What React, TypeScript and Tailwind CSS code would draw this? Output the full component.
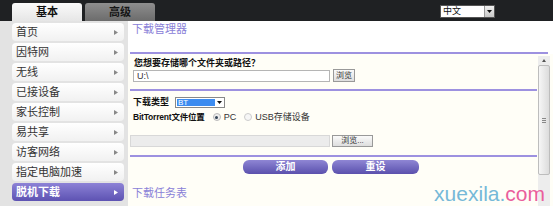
const NAV = ['首页', '因特网', '无线', '已接设备', '家长控制', '易共享', '访客网络', '指定电脑加速', '脱机下载'];

function Caret({ className }: { className: string }) {
  return (
    <svg width="4" height="5" viewBox="0 0 4 5" className={className}>
      <path d="M0 0 L4 2.5 L0 5 Z" fill="currentColor" />
    </svg>
  );
}

function Down() {
  return (
    <svg width="5" height="3" viewBox="0 0 5 3">
      <path d="M0 0 H5 L2.5 3 Z" fill="#111" />
    </svg>
  );
}

function Rule() {
  return <div className="h-[2px] bg-[#9d91e0]" />;
}

export default function App() {
  return (
    <div className="relative w-[553px] h-[206px] overflow-hidden bg-[#e3e3e3] font-['Liberation_Sans','Noto_Sans_CJK_SC',sans-serif] text-[#222]">
      {/* top bar */}
      <div className="flex items-end h-[21px] bg-[#1f2123] pl-[12px]">
        <div className="flex items-center justify-center w-[70px] h-[18px] rounded-t-[3px] bg-gradient-to-b from-[#fafafa] to-[#e6e6e6] text-[11px] font-bold text-[#111] leading-none">
          基本
        </div>
        <div className="flex items-center justify-center ml-[3px] w-[70px] h-[18px] rounded-t-[3px] bg-gradient-to-b from-[#8e8e8e] to-[#6c6c6c] text-[11px] font-bold text-[#161616] leading-none">
          高级
        </div>
        <div className="ml-auto mr-[58px] mb-[3px] flex h-[13px] w-[55px] border border-[#555] bg-white">
          <span className="flex-1 pl-[2px] text-[9px] leading-[11px] text-[#111]">中文</span>
          <span className="flex w-[10px] items-center justify-center border-l border-[#999] bg-gradient-to-b from-[#f0f0f0] to-[#c8c8c8]">
            <Down />
          </span>
        </div>
      </div>

      <div className="flex h-[185px]">
        {/* side nav */}
        <div className="flex w-[128px] shrink-0 flex-col gap-[2px] pl-[12px] pr-[4px] pt-[2px]">
          {NAV.map((n, i) => {
            const on = i === NAV.length - 1;
            return (
              <div
                key={n}
                className={`flex h-[18px] items-center rounded-[4px] pl-[4px] pr-[6px] text-[11px] leading-none ${
                  on
                    ? 'bg-gradient-to-b from-[#8d82d6] to-[#5d52b2] font-bold text-white'
                    : 'bg-gradient-to-b from-white to-[#f1f1f1] text-[#333]'
                }`}
              >
                <span className="flex-1">{n}</span>
                <Caret className={on ? 'text-white' : 'text-[#888]'} />
              </div>
            );
          })}
        </div>

        {/* content */}
        <div className="flex flex-1 flex-col bg-white">
          <div className="h-[31px] pl-[4px] pt-[2px] text-[11px] leading-[13px] text-[#8a81d8]">下载管理器</div>
          <div className="ml-[2px] mr-[5px]">
            <Rule />
          </div>

          <div className="flex flex-1 bg-[#fffef7]">
            <div className="ml-[2px] flex w-[407px] flex-col">
              <div className="mt-[4px] ml-[4px] text-[9px] font-bold leading-[11px] text-[#111]">您想要存储哪个文件夹或路径？</div>
              <div className="ml-[3px] flex items-center">
                <div className="h-[12px] w-[197px] border border-[#b5b5b5] bg-white pl-[3px] text-[9px] leading-[10px] text-[#333]">U:\</div>
                <div className="ml-[3px] flex h-[13px] w-[22px] items-center justify-center border border-[#999] bg-gradient-to-b from-[#fafafa] to-[#dedede] text-[8px] leading-none text-[#333]">
                  浏览
                </div>
              </div>
              <div className="mt-[7px]">
                <Rule />
              </div>

              <div className="mt-[6px] ml-[3px] flex h-[11px] items-center">
                <span className="w-[42px] whitespace-nowrap text-[9px] font-bold leading-none text-[#111]">下载类型</span>
                <div className="flex h-[11px] w-[50px] items-center border border-[#888] bg-white p-[1px]">
                  <span className="h-full w-[38px] bg-[#3c8cf0] pl-[1px] text-[8px] leading-[8px] text-white">BT</span>
                  <span className="flex flex-1 justify-center">
                    <Down />
                  </span>
                </div>
              </div>

              <div className="mt-[4px] ml-[3px] flex h-[10px] items-center whitespace-nowrap text-[9px] leading-none">
                <span className="mr-[8px] shrink-0 text-[8.5px] font-bold tracking-[-0.2px] text-[#111]">BitTorrent文件位置</span>
                <span className="flex h-[8px] w-[8px] shrink-0 items-center justify-center rounded-full border border-[#bbb] bg-[#eee]">
                  <span className="h-[3px] w-[3px] rounded-full bg-[#345]" />
                </span>
                <span className="ml-[3px] text-[#333]">PC</span>
                <span className="ml-[8px] h-[8px] w-[8px] shrink-0 rounded-full border border-[#ccc] bg-[#f6f6f6]" />
                <span className="ml-[3px] text-[#333]">USB存储设备</span>
              </div>

              <div className="mt-[13px] flex items-center">
                <div className="h-[12px] w-[200px] border border-[#d8d8d8] bg-[#ececec]" />
                <div className="ml-[2px] flex h-[12px] w-[41px] items-center justify-center border border-[#999] bg-gradient-to-b from-[#fafafa] to-[#dedede] text-[8px] leading-none text-[#333]">
                  浏览...
                </div>
              </div>
              <div className="mt-[8px]">
                <Rule />
              </div>

              <div className="mt-[3px] flex h-[14px]">
                <div className="ml-[113px] flex w-[85px] items-center justify-center rounded-[6px] bg-gradient-to-b from-[#8f86d4] to-[#5b50ad] text-[10px] font-bold leading-none text-white">
                  添加
                </div>
                <div className="ml-[4px] flex w-[87px] items-center justify-center rounded-[6px] bg-gradient-to-b from-[#8f86d4] to-[#5b50ad] text-[10px] font-bold leading-none text-white">
                  重设
                </div>
              </div>

              <div className="mt-[13px] ml-[2px] text-[11px] leading-[13px] text-[#8a81d8]">下载任务表</div>
            </div>

            {/* scrollbar */}
            <div className="ml-[1px] mr-[3px] mt-[2px] flex w-[12px] flex-col bg-[#ededed]">
              <div className="flex h-[9px] items-center justify-center">
                <svg width="4" height="3" viewBox="0 0 4 3">
                  <path d="M0 3 L2 0 L4 3 Z" fill="#555" />
                </svg>
              </div>
              <div className="flex h-[110px] items-center justify-center rounded-[2px] border border-[#bdbdbd] bg-gradient-to-r from-[#f6f6f6] to-[#dcdcdc]">
                <div className="flex flex-col gap-[1px]">
                  <div className="h-px w-[4px] bg-[#888]" />
                  <div className="h-px w-[4px] bg-[#888]" />
                  <div className="h-px w-[4px] bg-[#888]" />
                </div>
              </div>
            </div>
          </div>
        </div>
      </div>

      {/* watermark */}
      <div className="absolute right-[8px] bottom-[2px] font-['Liberation_Sans',sans-serif] text-[21px] leading-none">
        <span className="text-[#76b9d8]">xuexila.</span>
        <span className="text-[#ea5f9c]">com</span>
      </div>
    </div>
  );
}
